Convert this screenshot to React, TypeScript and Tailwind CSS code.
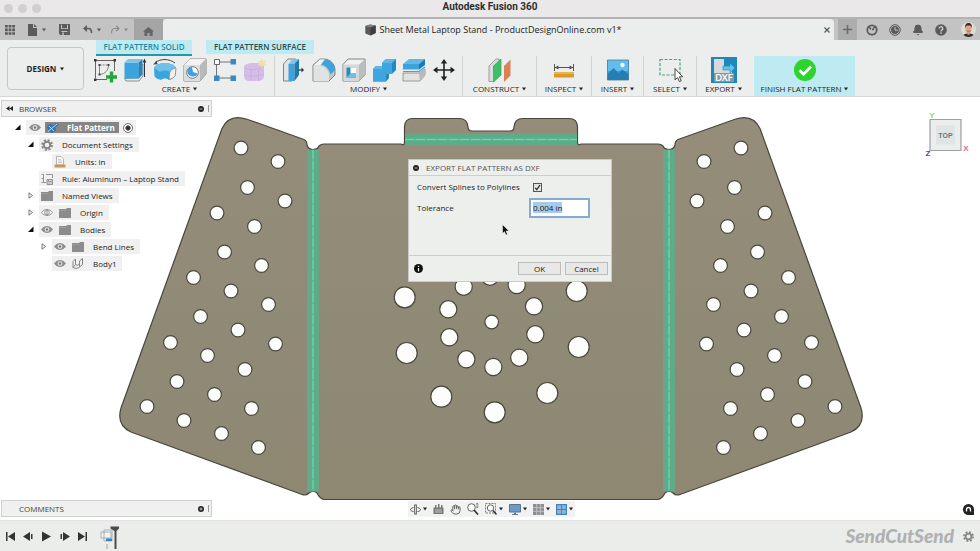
import React, { useEffect, useRef, useState } from 'react';
import { Bell, Hand } from 'lucide-react';

const Caret: React.FC<{ className?: string }> = ({ className = 'text-[#222]' }) => (
    <svg width="4" height="4" viewBox="0 0 4 4" className={`shrink-0 ${className}`}>
        <path d="M0 0.500h4L2 3.500z" fill="currentColor" />
    </svg>
);

/* ---------- Title bar and document tabs ---------- */

const TitleBar: React.FC = () => (
    <header className="relative flex h-[17px] shrink-0 items-center justify-center bg-[#eae8e8]">
        <div className="absolute left-1 flex gap-[5px]">
            <span className="size-[9px] rounded-full bg-[#d1cfcf]" />
            <span className="size-[9px] rounded-full bg-[#d1cfcf]" />
            <span className="size-[9px] rounded-full bg-[#d1cfcf]" />
        </div>
        <h1 className="pb-1 font-[Roboto,sans-serif] text-[10px] leading-3 font-bold text-[#2e2e2e]">Autodesk Fusion 360</h1>
    </header>
);

const DocumentTabs: React.FC = () => (
    <div className="flex h-[23px] shrink-0 border-t-2 border-[#b3b3b3] bg-[#c3c3c3] text-[#5b5b5b]">
        <div className="flex items-center pl-1">
            <button aria-label="Data panel" className="flex w-[23px] pl-px">
                <svg width="10" height="10" viewBox="0 0 10 10" fill="currentColor">
                    <path d="M0 0h2.800v2.600H0zM3.600 0h2.800v2.600H3.600zM7.200 0H10v2.600H7.200zM0 3.600h2.800v2.600H0zM3.600 3.600h2.800v2.600H3.600zM7.200 3.600H10v2.600H7.200zM0 7.200h2.800v2.600H0zM3.600 7.200h2.800v2.600H3.600zM7.200 7.200H10v2.600H7.200z" />
                </svg>
            </button>
            <button aria-label="File" className="flex w-[32px] items-center gap-1">
                <svg width="11" height="12" viewBox="0 0 11 12">
                    <path d="M1 0h5v4h4v8H1z" fill="currentColor" />
                    <path d="M7 0l3 3H7z" fill="currentColor" />
                </svg>
                <Caret className="text-[#5b5b5b]" />
            </button>
            <button aria-label="Save" className="flex w-[24px]">
                <svg width="11" height="11" viewBox="0 0 11 11">
                    <path d="M0 0h11v11H1.500L0 9.500z" fill="currentColor" />
                    <path d="M2 0.800h1v3.400h5V0.800h1v4.200H2zM2.400 7h6v1H2.400zM3.300 8.600h1.500V11H3.300z" fill="#c3c3c3" />
                </svg>
            </button>
            <button aria-label="Undo" className="flex w-[27px] items-center gap-1">
                <svg width="10" height="9" viewBox="0 0 10 9" fill="none">
                    <path d="M2 3.500h3.500q3 0 3 4.500" stroke="currentColor" strokeWidth="1.600" />
                    <path d="M0 3.500L4 0v7z" fill="currentColor" />
                </svg>
                <Caret className="text-[#5b5b5b]" />
            </button>
            <button aria-label="Redo" className="flex w-[24px] items-center gap-1 text-[#8c8c8c]">
                <svg width="10" height="9" viewBox="0 0 10 9" fill="none" stroke="currentColor" strokeWidth="1.200">
                    <path d="M9 3.500H4.500q-3 0-3 5M6 0.800L9 3.500 6 6.200" />
                </svg>
                <Caret className="text-[#8c8c8c]" />
            </button>
        </div>
        <button aria-label="Home" className="flex w-[29px] items-center justify-center bg-[#a5a5a5] pt-1">
            <svg width="11" height="9" viewBox="0 0 11 9">
                <path d="M5.500 0L11 4.600H9.600V9H6.600V6H4.400v3h-3V4.600H0z" fill="#656565" />
            </svg>
        </button>
        <div className="flex flex-1 items-center rounded-t-sm bg-[#ebeeec] pr-1">
            <div className="flex flex-1 items-center justify-center gap-[3px] text-[9px] text-[#222]">
                <svg width="11" height="12" viewBox="0 0 11 12">
                    <path d="M0.300 2L5 0.500l5.700 1v7.500L5.500 11.500 0.300 9.500z" fill="#595959" />
                    <path d="M5.500 3.200l5.200-1.700V9L5.500 11.500z" fill="#3f3f3f" />
                    <path d="M0.300 2L5 0.500l5.700 1-5.200 1.700z" fill="#828282" />
                </svg>
                <span>Sheet Metal Laptop Stand - ProductDesignOnline.com v1*</span>
            </div>
            <button aria-label="Close tab" className="flex">
                <svg width="6" height="6" viewBox="0 0 6 6">
                    <path d="M0.500 0.500l5 5M5.500 0.500l-5 5" stroke="#555" strokeWidth="1.100" />
                </svg>
            </button>
        </div>
        <div className="flex items-center pr-1">
            <button aria-label="New tab" className="ml-1 flex h-full w-[19px] items-center justify-center bg-[#adadad]">
                <svg width="9" height="9" viewBox="0 0 9 9">
                    <path d="M4.500 0v9M0 4.500h9" stroke="#6b6b6b" strokeWidth="1.600" />
                </svg>
            </button>
            <button aria-label="Extensions" className="flex w-[26px] justify-center pl-1">
                <svg width="12" height="12" viewBox="0 0 12 12" fill="none" stroke="currentColor">
                    <circle cx="6" cy="6" r="4.700" strokeWidth="1.800" />
                    <path d="M3 2.500l2 3M7 4.500l3-2.500M6 5.500l2 0" strokeWidth="1.400" />
                </svg>
            </button>
            <button aria-label="Job status" className="flex w-[23px] justify-center">
                <svg width="12" height="12" viewBox="0 0 12 12">
                    <circle cx="6" cy="6" r="5.300" fill="none" stroke="currentColor" strokeWidth="1" />
                    <circle cx="6" cy="6" r="4" fill="currentColor" />
                    <path d="M6 3v3.200h3" fill="none" stroke="#c3c3c3" strokeWidth="1" />
                </svg>
            </button>
            <button aria-label="Notifications" className="flex w-[23px] justify-center">
                <Bell size={12} fill="currentColor" />
            </button>
            <button aria-label="Help" className="flex w-[23px] justify-center">
                <svg width="12" height="12" viewBox="0 0 12 12">
                    <circle cx="6" cy="6" r="5.800" fill="currentColor" />
                    <path d="M4.200 4.600a1.800 1.800 0 1 1 2.700 1.500c-.6.4-.9.6-.9 1.300" fill="none" stroke="#dcdcdc" strokeWidth="1.200" />
                    <circle cx="6" cy="9" r="0.800" fill="#dcdcdc" />
                </svg>
            </button>
            <button aria-label="Account" className="ml-[9px] flex overflow-hidden rounded-full">
                <svg width="15" height="15" viewBox="0 0 15 15">
                    <rect width="15" height="15" fill="#dedad4" />
                    <path d="M1.500 15c.3-2.800 2.600-3.600 6-3.600s5.700.8 6 3.600z" fill="#2b2b2d" />
                    <path d="M5.800 9.500h3.400v2.600l-1.700 1.200-1.700-1.200z" fill="#c98f75" />
                    <ellipse cx="7.500" cy="6.800" rx="3.100" ry="4.200" fill="#d9a58c" />
                    <path d="M4.200 6.200C3.800 2.500 5.300 1 7.500 1s3.800 1.400 3.300 5.200C10.300 4 9.500 3.600 7.500 3.600S4.700 4 4.200 6.200z" fill="#3d2a20" />
                    <path d="M5.700 8.800q1.800 1.200 3.600 0" fill="none" stroke="#8a4a3c" strokeWidth="0.600" />
                </svg>
            </button>
        </div>
    </div>
);

/* ---------- Ribbon icons, all drawn on a 26px grid ---------- */

const Icon: React.FC<{ children: React.ReactNode }> = ({ children }) => (
    <svg width="26" height="26" viewBox="0 0 26 26" fill="none" className="shrink-0">
        {children}
    </svg>
);

const SketchIcon = () => (
    <Icon>
        <path d="M4 3.500h18M3.500 4v17M4 22.500h11M22.500 4v10" stroke="#555" strokeWidth="0.900" />
        <path d="M2 2h2.500v2.500H2zM21.500 2H24v2.500h-2.500zM2 21.500h2.500V24H2z" fill="#333" />
        <path d="M7.500 8v10M16.500 8c0 5-3 9-9 9.500" stroke="#777" strokeWidth="0.900" />
        <path d="M7.500 8h9" stroke="#777" strokeWidth="0.900" strokeDasharray="2 1" />
        <path d="M6.500 7h2v2h-2zM15.500 7h2v2h-2zM6.500 16.500h2v2h-2z" fill="#444" />
        <path d="M19.500 14.500v11M14 20h11" stroke="#25a53f" strokeWidth="3.400" />
    </Icon>
);

const ExtrudeIcon = () => (
    <Icon>
        <path d="M2.500 21.500L4 24h13l4-5V7l-4 3v11z" fill="#e9ebea" stroke="#777" strokeWidth="0.800" />
        <path d="M2.500 5.500h14v16h-14z" fill="#3ba3dd" />
        <path d="M2.500 5.500L6 2h14.500l-4 3.500z" fill="#7cc6ec" />
        <path d="M16.500 5.500l4-3.500v15.500l-4 4z" fill="#2585bd" />
        <path d="M22.500 20V5" stroke="#333" strokeWidth="1" />
        <path d="M22.500 1.500l1.800 4h-3.600z" fill="#333" />
    </Icon>
);

const RevolveIcon = () => (
    <Icon>
        <path d="M2 11c3-6 18-7 22 0l-1 8c-1 2-4 3-6 4-2-2-6-2-8 0-3-1-6-2-6.500-4z" fill="#3ba3dd" />
        <path d="M2 11c3-6 18-7 22 0l-6 4c-2.500-2-7-2-10 0z" fill="#6fc0ea" />
        <path d="M17.500 16c1-3 3.500-5 6.500-5l-.8 8c-1.700 2-4 3-6.200 3.500z" fill="#eef0f0" stroke="#858585" strokeWidth="0.800" />
        <path d="M3 5.500C9 1.500 17 1.500 23 6" stroke="#444" strokeWidth="1" />
        <path d="M1 7.500l3.800-3.600.7 3.300z" fill="#444" />
    </Icon>
);

const HoleIcon = () => (
    <Icon>
        <path d="M2 8l6-6h16v15l-6 7H2z" fill="#d3d4d4" stroke="#777" strokeWidth="0.900" />
        <path d="M2 8h16v16H2z" fill="#dcdddd" />
        <path d="M2 8l6-6h16l-6 6z" fill="#f2f2f2" />
        <path d="M18 8l6-6v15l-6 7z" fill="#b8b9b9" />
        <circle cx="10.500" cy="15.500" r="5.800" fill="#fff" stroke="#666" strokeWidth="0.900" />
        <path d="M5.500 13a5.500 5.500 0 0 0 10.300 3.500L11 15l-1-5c-2 0-3.800 1-4.500 3z" fill="#3ba3dd" />
    </Icon>
);

const PatternIcon = () => (
    <Icon>
        <path d="M7 5h13M4.500 8v12M7 21h13" stroke="#5c6670" strokeWidth="0.900" />
        <path d="M2.500 2.500h5v5h-5z" fill="#fff" stroke="#555" strokeWidth="0.900" />
        <path d="M18.500 2h5.500v5.500h-5.500zM2 18.500h5.500V24H2zM18.500 18.500H24V24h-5.500z" fill="#3f88bd" />
    </Icon>
);

const FormIcon = () => (
    <Icon>
        <path d="M2 11c0-3 2-4 6-5h9l5 3v10c0 3-3 5-6 5H7c-3 0-5-2-5-5z" fill="#d5bde8" />
        <path d="M2 11c4 2 10 2 14 1 3-.8 5-2 6-3M9 12v12M16.500 12v12M2 18c5 1.500 14 1.500 20-1" stroke="#c9aee0" strokeWidth="0.900" />
        <path d="M20 1l1.200 3L24.500 3.500 22.500 6l2 2.600-3.300-.4L20 11.500l-1.200-3.300-3.300.4 2-2.600-2-2.500 3.300.5z" fill="#efdfa8" />
    </Icon>
);

const PressPullIcon = () => (
    <Icon>
        <path d="M2.500 24V7L7 2h8v18l-4 4z" fill="#e3e5e5" stroke="#777" strokeWidth="0.900" />
        <path d="M7.500 7h6v17h-6z" fill="#3ba3dd" />
        <path d="M7.500 7l4-5H18l-4.500 5z" fill="#7cc6ec" />
        <path d="M13.500 7L18 2v16l-4.500 6z" fill="#2078ab" />
        <path d="M17.500 13h4" stroke="#333" strokeWidth="1.200" />
        <path d="M20.500 10.500L23 13l-2.500 2.500z" fill="#333" />
    </Icon>
);

const FilletIcon = () => (
    <Icon>
        <path d="M2 24V8l7-6h4c6 0 11 5 11 11v5l-6 6z" fill="#c4c6c6" stroke="#777" strokeWidth="0.900" />
        <path d="M2.500 8.500L9 2.500h5L9 8.500z" fill="#f4f5f5" />
        <path d="M2.500 8.500h5c6 0 10.500 5 10.500 10.500v5H2.500z" fill="#e1e3e3" />
        <path d="M10 7.500l4-5C19.500 3 24 7.500 24 13l-4.500 4.500C18.500 12.500 15 8.500 10 7.500z" fill="#3ba3dd" />
    </Icon>
);

const ShellIcon = () => (
    <Icon>
        <path d="M2 7.500L7 2h17v16l-6 6H2z" fill="#f0f1f1" stroke="#777" strokeWidth="0.900" />
        <path d="M18 7.500L24 2v16l-6 6z" fill="#bcbebe" />
        <path d="M2.500 7.500H18V24H2.500z" fill="#d6d8d8" />
        <path d="M5.500 10.500H15v10H5.500z" fill="#2c89bd" />
        <path d="M9.500 10.500H15v6H9.500z" fill="#fff" />
        <path d="M5.500 20.500l4-4H15v4z" fill="#6dbfe9" />
    </Icon>
);

const CombineIcon = () => (
    <Icon>
        <path d="M11 6l4-4h10v11l-4 4h-3v4l-3 3.500H2V12l3-3h6z" fill="#2787bf" />
        <path d="M2 12h9V6h10v11h-6v7.500H2z" fill="#3ea6df" />
        <path d="M11 6l4-4h10l-4 4zM2 12l3-3h6v3z" fill="#5fb6e6" />
    </Icon>
);

const SplitIcon = () => (
    <Icon>
        <path d="M2 16h16l6-4v6l-5 6H2z" fill="#e1e3e3" stroke="#858585" strokeWidth="0.800" />
        <path d="M18 16l6-4v6l-5 6z" fill="#b9bbbb" />
        <path d="M2 7h16v5.500H2z" fill="#3ba3dd" />
        <path d="M2 7l6-5h16l-6 5z" fill="#62b9e8" />
        <path d="M18 7l6-5v6l-6 4.500z" fill="#2078ab" />
        <path d="M2 14.500h16l6-4.500" stroke="#3ba3dd" strokeWidth="1.200" />
    </Icon>
);

const MoveIcon = () => (
    <Icon>
        <path d="M13 5v16M5 13h16" stroke="#222" strokeWidth="1.600" />
        <path d="M13 2l3.200 4.500H9.800zM13 24l3.200-4.500H9.800zM2 13l4.500-3.200v6.400zM24 13l-4.500-3.200v6.400z" fill="#222" />
    </Icon>
);

const ConstructIcon = () => (
    <Icon>
        <path d="M2 9l7-7h3v17l-6 5.500H2z" fill="#dcdede" stroke="#888" strokeWidth="0.800" />
        <path d="M6.500 9L14 2v16l-7.500 7z" fill="#3cc169" stroke="#2b9350" strokeWidth="0.600" />
        <path d="M17 9l6.500-6.500v16L17 25z" fill="#dd8057" />
    </Icon>
);

const InspectIcon = () => (
    <Icon>
        <path d="M3.500 7v7M22.500 7v7M4 10.500h18" stroke="#555" strokeWidth="1" />
        <path d="M3.500 10.500l4-2v4zM22.500 10.500l-4-2v4z" fill="#555" />
        <path d="M3 15h20v5.500H3z" fill="#d79a2b" />
        <path d="M3 15h20v2H3z" fill="#eab44e" />
    </Icon>
);

const InsertIcon = () => (
    <Icon>
        <path d="M2.500 3h21v20h-21z" fill="#3aa1dc" />
        <path d="M2.500 3h21v11h-21z" fill="#62bdec" />
        <path d="M2.500 17l6-6 5 5 3.500-3.500 6.500 4.500v6h-21z" fill="#247eb2" />
        <circle cx="17.500" cy="8" r="2.200" fill="#f5f8fa" />
        <path d="M2.500 3h21v20h-21z" stroke="#4d7895" strokeWidth="0.800" />
    </Icon>
);

const SelectIcon = () => (
    <Icon>
        <path d="M3 2.500h20v15.500H3z" stroke="#46a86a" strokeWidth="1.200" strokeDasharray="3 1.600" />
        <path d="M18 11.500v11.300l2.600-2.200 1.800 4 1.800-.8-1.800-4h3.200z" fill="#fff" stroke="#333" strokeWidth="0.900" />
    </Icon>
);

const ExportIcon = () => (
    <Icon>
        <path d="M0 0h26v26H0z" fill="#1e88ba" />
        <path d="M3 2h10v8h8v8H3z" fill="#d6dadb" />
        <path d="M12 9h7V6l5 5-5 5v-3h-7z" fill="#5fc2ee" stroke="#1e88ba" strokeWidth="0.600" />
        <path d="M3 16h20v9H3z" fill="#8c959a" />
        <text x="13" y="24" textAnchor="middle" fill="#fff" className="font-[Lato,sans-serif] text-[9px] font-bold">DXF</text>
    </Icon>
);

const FinishIcon = () => (
    <Icon>
        <circle cx="13" cy="13" r="11" fill="#2cd42c" />
        <path d="M7.500 13.200l4 4 7.500-7.700" stroke="#fff" strokeWidth="2.800" />
    </Icon>
);

/* ---------- Ribbon ---------- */

interface ToolGroupProps {
    label: string;
    icons: { name: string; icon: React.ReactNode }[];
    className: string;
}

const ToolGroup: React.FC<ToolGroupProps> = ({ label, icons, className }) => (
    <div className={`flex flex-col items-center pt-px ${className}`}>
        <div className="flex gap-1">
            {icons.map(({ name, icon }) => (
                <button key={name} aria-label={name} title={name}>
                    {icon}
                </button>
            ))}
        </div>
        <button className="flex items-center gap-[3px] text-[8px] leading-3 font-medium whitespace-nowrap">
            {label} <Caret />
        </button>
    </div>
);

const Ribbon: React.FC = () => (
    <div className="flex h-[57px] shrink-0 gap-2 border-b border-[#d5d6d6] bg-[#ebeeec] pl-[7px] text-[#1f1f1f]">
        <button className="mt-[7px] flex h-[43px] w-[77px] shrink-0 items-center justify-center gap-1 rounded-sm border border-[#c5c7c6] text-[8px] font-bold">
            DESIGN <Caret />
        </button>
        <div className="flex min-w-0 flex-1 flex-col">
            <div className="flex h-4 shrink-0 items-start gap-[14px] pl-1 text-[8px] leading-[14px] font-semibold">
                <button className="h-4 w-24 border-b-2 border-[#2695ae] bg-[#bdebf1] text-[#1d8ba4]">FLAT PATTERN SOLID</button>
                <button className="w-[108px] bg-[#bdebf1] text-[#2b4b50]">FLAT PATTERN SURFACE</button>
            </div>
            <div className="flex flex-1 [&>div]:shrink-0">
                <ToolGroup
                    label="CREATE"
                    className="w-[183px] border-r border-[#d0d2d1] pr-[7px]"
                    icons={[
                        { name: 'Create Sketch', icon: <SketchIcon /> },
                        { name: 'Extrude', icon: <ExtrudeIcon /> },
                        { name: 'Revolve', icon: <RevolveIcon /> },
                        { name: 'Hole', icon: <HoleIcon /> },
                        { name: 'Pattern', icon: <PatternIcon /> },
                        { name: 'Create Form', icon: <FormIcon /> },
                    ]}
                />
                <ToolGroup
                    label="MODIFY"
                    className="w-[188px] border-r border-[#d0d2d1]"
                    icons={[
                        { name: 'Press Pull', icon: <PressPullIcon /> },
                        { name: 'Fillet', icon: <FilletIcon /> },
                        { name: 'Shell', icon: <ShellIcon /> },
                        { name: 'Combine', icon: <CombineIcon /> },
                        { name: 'Split Body', icon: <SplitIcon /> },
                        { name: 'Move', icon: <MoveIcon /> },
                    ]}
                />
                <ToolGroup label="CONSTRUCT" className="w-[74px] border-r border-[#d0d2d1]" icons={[{ name: 'Offset Plane', icon: <ConstructIcon /> }]} />
                <ToolGroup label="INSPECT" className="w-[55px] border-r border-[#d0d2d1]" icons={[{ name: 'Measure', icon: <InspectIcon /> }]} />
                <ToolGroup label="INSERT" className="w-[52px] border-r border-[#d0d2d1]" icons={[{ name: 'Canvas', icon: <InsertIcon /> }]} />
                <ToolGroup label="SELECT" className="w-[53px] border-r border-[#d0d2d1]" icons={[{ name: 'Window Selection', icon: <SelectIcon /> }]} />
                <ToolGroup label="EXPORT" className="w-[53px]" icons={[{ name: 'Export as DXF', icon: <ExportIcon /> }]} />
                <ToolGroup label="FINISH FLAT PATTERN" className="ml-1 w-[101px] bg-[#bdebf1]" icons={[{ name: 'Finish', icon: <FinishIcon /> }]} />
            </div>
        </div>
    </div>
);

/* ---------- Browser tree ---------- */

const Eye: React.FC<{ off?: boolean }> = ({ off }) => (
    <svg width="12" height="9" viewBox="0 0 12 9" className="shrink-0">
        <path d="M0.500 4.500C3 0.500 9 0.500 11.500 4.500 9 8.500 3 8.500 0.500 4.500z" fill={off ? 'none' : '#8e8e8e'} stroke="#8e8e8e" strokeWidth="0.900" />
        <circle cx="6" cy="4.500" r="2.300" fill={off ? 'none' : '#e8e8e8'} stroke={off ? '#8e8e8e' : 'none'} strokeWidth="0.900" />
        {off ? <path d="M6 1.500v6" stroke="#8e8e8e" strokeWidth="0.900" /> : <circle cx="6" cy="4.500" r="1.200" fill="#777" />}
    </svg>
);

const Folder = () => (
    <svg width="12" height="10" viewBox="0 0 12 10" className="shrink-0">
        <path d="M0 1h7l1-1h4v10H0z" fill="#8c8c8c" />
        <path d="M0 2.500h7.500" stroke="#a8a8a8" strokeWidth="0.600" />
    </svg>
);

const Gear: React.FC<{ size?: number }> = ({ size = 12 }) => (
    <svg width={size} height={size} viewBox="0 0 12 12" className="shrink-0">
        <circle cx="6" cy="6" r="5" fill="none" stroke="#858585" strokeWidth="1.800" strokeDasharray="2.100 1.830" />
        <circle cx="6" cy="6" r="3.200" fill="none" stroke="#858585" strokeWidth="1.900" />
    </svg>
);

const Units = () => (
    <svg width="12" height="12" viewBox="0 0 12 12" className="shrink-0">
        <path d="M2.500 0.500h4.500l2.500 2.500v6h-7z" fill="#fafafa" stroke="#999" strokeWidth="0.700" />
        <path d="M4 3.500h3M4 5h4M4 6.500h4" stroke="#aaa" strokeWidth="0.600" />
        <path d="M0.500 8.500h11v3H0.500z" fill="#c49a5c" />
    </svg>
);

const Rule = () => (
    <svg width="12" height="12" viewBox="0 0 12 12" fill="none" stroke="#8c8c8c" strokeWidth="0.900" className="shrink-0">
        <path d="M0.500 1.500H3M5 1.500h6.500V5M0.500 5.500H3M0.500 9.500H5M2.500 1.500v8" />
        <path d="M6 6.500h5.500v5H6zM7.500 6.500v2h3" fill="#c8c8c8" />
    </svg>
);

const Body = () => (
    <svg width="12" height="11" viewBox="0 0 12 11" fill="none" stroke="#858585" strokeWidth="1" className="shrink-0">
        <path d="M1 3.500L3.500 1v5.500L1 9.500zM1 9.500q3 2 6 0L10.500 6.500V0.500L7.500 3v5.500M3.500 6.500q1.500 1.500 4 0" />
    </svg>
);

const FlatPattern = () => (
    <svg width="13" height="12" viewBox="0 0 13 12" className="shrink-0">
        <path d="M1 4.500l3-3 3 2 3-2.500 2.500 2-3 2.500.5 3-4 2.500-4-2z" fill="#3277b4" />
        <path d="M2 9.500l9-7.500M3 4l5 5" stroke="#d5e7f5" strokeWidth="0.900" />
    </svg>
);

type Arrow = 'open' | 'closed';

interface TreeRowProps {
    label: string;
    icons: React.ReactNode;
    arrow?: Arrow;
    indent: string;
}

const TreeArrow: React.FC<{ arrow?: Arrow }> = ({ arrow }) => (
    <span className="flex w-3 shrink-0 items-center pl-px">
        {arrow && (
            <button aria-label={arrow === 'open' ? 'Collapse' : 'Expand'} className="flex">
                <svg width="6" height="7" viewBox="0 0 6 7">
                    {arrow === 'open' ? <path d="M5.500 0.500v5.500H0z" fill="#111" /> : <path d="M1 0.800l3.500 2.700L1 6.200z" fill="none" stroke="#555" strokeWidth="0.800" />}
                </svg>
            </button>
        )}
    </span>
);

const TreeRow: React.FC<TreeRowProps> = ({ label, icons, arrow, indent }) => (
    <li className={`flex h-[15px] ${indent}`}>
        <TreeArrow arrow={arrow} />
        <div className="flex items-center gap-[6px] bg-[#eff0ef] pr-[6px] pl-[2px]">
            {icons}
            <span className="pl-[3px] whitespace-nowrap">{label}</span>
        </div>
    </li>
);

const PanelHeader: React.FC<{ title: string; collapsible?: boolean }> = ({ title, collapsible }) => (
    <div className="flex h-[17px] w-[211px] items-center border border-[#cfd0cf] bg-[#eff0ef] pl-1 text-[8px] text-[#444]">
        <span className="w-[13px]">
            {collapsible && (
                <svg width="7" height="5" viewBox="0 0 7 5">
                    <path d="M3.500 0v5L0 2.500zM7 0v5L3.500 2.500z" fill="#222" />
                </svg>
            )}
        </span>
        <h2 className="flex-1">{title}</h2>
        <button aria-label={`${title} options`} className="flex">
            <svg width="6" height="6" viewBox="0 0 6 6">
                <circle cx="3" cy="3" r="3" fill="#222" />
                <path d="M1.500 3h3" stroke="#ddd" strokeWidth="0.800" />
                {!collapsible && <path d="M3 1.500v3" stroke="#ddd" strokeWidth="0.800" />}
            </svg>
        </button>
        <span className="ml-1 h-[7px] w-[3px] border-l border-[#999]" />
    </div>
);

const BrowserPanel: React.FC = () => (
    <section className="flex flex-col gap-[2px]">
        <PanelHeader title="BROWSER" collapsible />
        <ul className="mt-px flex flex-col gap-[2px] text-[8px] text-[#222]">
            <li className="flex h-[15px] pl-[13px]">
                <TreeArrow arrow="open" />
                <div className="flex items-center gap-1 bg-[#eff0ef] px-[3px]">
                    <Eye />
                    <span className="flex h-[11px] items-center gap-[8px] bg-[#858585] pr-1 pl-px font-bold whitespace-nowrap text-white">
                        <FlatPattern /> Flat Pattern
                    </span>
                    <input type="radio" aria-label="Activate Flat Pattern" defaultChecked className="size-[10px] appearance-none rounded-full border border-[#777] bg-[radial-gradient(#333_2px,#f5f5f5_3px)]" />
                </div>
            </li>
            <TreeRow label="Document Settings" indent="pl-[26px]" arrow="open" icons={<Gear />} />
            <TreeRow label="Units: in" indent="pl-[39px]" icons={<Units />} />
            <TreeRow label="Rule: Aluminum – Laptop Stand" indent="pl-[26px]" icons={<Rule />} />
            <TreeRow label="Named Views" indent="pl-[26px]" arrow="closed" icons={<Folder />} />
            <TreeRow label="Origin" indent="pl-[26px]" arrow="closed" icons={<><Eye off /><Folder /></>} />
            <TreeRow label="Bodies" indent="pl-[26px]" arrow="open" icons={<><Eye /><Folder /></>} />
            <TreeRow label="Bend Lines" indent="pl-[39px]" arrow="closed" icons={<><Eye /><Folder /></>} />
            <TreeRow label="Body1" indent="pl-[39px]" icons={<><Eye /><Body /></>} />
        </ul>
    </section>
);

/* ---------- Sheet metal part ---------- */

const WING_HOLES = [
    [241, 148], [278, 161.5], [247.5, 187.5], [285, 201], [217, 213], [254.5, 226.5],
    [224.5, 252], [261.5, 265.5], [193.5, 277.5], [231, 291], [268.5, 304.5], [200.5, 316.5],
    [238, 330], [275.5, 344], [170.5, 342.5], [207.5, 355.5], [245, 369.5], [177, 381.5],
    [214.5, 394.5], [251.5, 408.5], [147, 406.5], [184, 420.5], [221.5, 433.5], [258.5, 447.5],
];

const CENTER_HOLES = [
    [404.7, 297.3, 10.5], [406.7, 353, 10.5], [441.3, 396.7, 10.5], [494.7, 412.3, 10.5],
    [547.3, 393, 10.5], [578.7, 347, 10.5], [576.7, 291, 10.5],
    [448.3, 309.3, 8.6], [449.3, 337.3, 8.6], [466.3, 359.3, 8.6], [493.3, 367, 8.6],
    [519.3, 357.7, 8.6], [535.3, 334.3, 8.6], [534, 306.3, 8.6], [516.7, 285, 8.6],
    [463.7, 286.7, 8.6], [490, 276.7, 8.6], [491.7, 322, 6.8],
];

const Wing: React.FC = () => (
    <g>
        {WING_HOLES.map(([x, y]) => (
            <circle key={`${x}-${y}`} cx={x} cy={y} r="6.9" fill="#fcfdfb" />
        ))}
        <path d="M307 149.500h12V491.500h-12z" fill="#6aa686" stroke="none" />
        <path d="M309.500 150V491M316.500 150V491" stroke="#55b08c" strokeWidth="1.500" />
        <path d="M313 150V491" stroke="#4cc39a" strokeWidth="2" />
        <path d="M313 150V491" stroke="#74dcb8" strokeWidth="0.800" strokeDasharray="9 2" />
    </g>
);

const FlatPart: React.FC = () => (
    <svg viewBox="0 97 980 423" className="absolute inset-0 size-full" stroke="#48473e" strokeWidth="1.200">
        <defs>
            <linearGradient id="metal" x1="0" y1="0" x2="0" y2="1">
                <stop offset="0" stopColor="#958d79" />
                <stop offset="0.550" stopColor="#8f8a76" />
                <stop offset="1" stopColor="#8e8873" />
            </linearGradient>
        </defs>
        <path
            d="M304 139.500L247 119.200Q229 113.500 222 128.500L121 408Q116 425 131 432L302 494.500Q306 496 309 493Q313 489.500 317 493Q320 499.500 325 499.500H657Q662 499.500 665 493Q669 489.500 673 493Q676 496 680 494.500L851 432Q866 425 861 408L760 128.500Q753 113.500 735 119.200L678 139.500Q675 141 675 145Q674 149.500 669 149.500Q664 149.500 663 146Q661 144 658 144H581Q577.500 146 577.500 142V127Q577.500 118.500 569 118.500H523Q514.500 118.500 514 127Q514 131 510 131H472Q468 131 468 127Q467.500 118.500 459 118.500H413Q404.500 118.500 404.500 127V142Q404.500 146 401 144H324Q321 144 319 146Q318 149.500 313 149.500Q308 149.500 307 145Q307 141 304 139.500Z"
            fill="url(#metal)"
        />
        <Wing />
        <g transform="translate(982 0) scale(-1 1)">
            <Wing />
        </g>
        <path d="M405 133.500h172v12H405z" fill="#6aa686" stroke="none" />
        <path d="M405 136h172M405 143h172" stroke="#55b08c" strokeWidth="1.500" />
        <path d="M405 139.500h172" stroke="#4cc39a" strokeWidth="2" />
        <path d="M405 139.500h172" stroke="#74dcb8" strokeWidth="0.800" strokeDasharray="9 2" />
        {CENTER_HOLES.map(([x, y, r]) => (
            <circle key={`${x}-${y}`} cx={x} cy={y} r={r} fill="#fdfefc" />
        ))}
    </svg>
);

const ViewCube: React.FC = () => (
    <svg width="48" height="52" viewBox="0 0 48 52" className="relative font-[Liberation_Sans,sans-serif]" aria-label="View cube">
        <path d="M7 9.500h31v31H7z" fill="#eceeee" stroke="#9da1a1" strokeWidth="1.200" />
        <path d="M13 15.500h19v19H13z" fill="#dfe5e4" />
        <text x="22.500" y="28" textAnchor="middle" fill="#70777a" className="text-[7px] font-bold">TOP</text>
        <text x="9" y="8" textAnchor="middle" fill="#7ee08f" className="text-[8px] font-bold">Y</text>
        <text x="43" y="41" textAnchor="middle" fill="#d8707a" className="text-[8px] font-bold">X</text>
        <text x="5" y="46" textAnchor="middle" fill="#4343c5" className="text-[8px] font-bold">Z</text>
    </svg>
);

/* ---------- Export dialog ---------- */

const ExportDialog: React.FC = () => {
    const [convert, setConvert] = useState(true);
    const [tolerance, setTolerance] = useState('0.004 in');
    const toleranceRef = useRef<HTMLInputElement>(null);

    useEffect(() => {
        toleranceRef.current?.focus();
        toleranceRef.current?.select();
    }, []);

    return (
        <form
            role="dialog"
            aria-labelledby="export-title"
            onSubmit={(e) => e.preventDefault()}
            className="absolute top-[62px] left-1/2 -ml-[82px] flex h-[123px] w-[204px] flex-col border border-[#c9c9c9] bg-[#edefed] text-[8px] text-[#222]"
        >
            <div className="flex h-4 items-center gap-[7px] border-b border-[#cdcfcd] pl-1">
                <svg width="6" height="6" viewBox="0 0 6 6">
                    <circle cx="3" cy="3" r="3" fill="#222" />
                    <path d="M1.500 3h3" stroke="#ddd" strokeWidth="0.800" />
                </svg>
                <h2 id="export-title" className="text-[#555]">EXPORT FLAT PATTERN AS DXF</h2>
            </div>
            <div className="grid flex-1 grid-cols-[112px_61px] content-start items-center gap-y-[5px] pt-[5px] pl-2">
                <label htmlFor="convert">Convert Splines to Polylines</label>
                <span className="relative flex pl-1">
                    <input
                        id="convert"
                        type="checkbox"
                        checked={convert}
                        onChange={(e) => setConvert(e.target.checked)}
                        className="size-[9px] appearance-none border border-[#555] bg-[#e3e3e3]"
                    />
                    {convert && (
                        <svg width="9" height="9" viewBox="0 0 9 9" className="pointer-events-none absolute">
                            <path d="M2.200 4.800l1.600 1.800L7 2" fill="none" stroke="#222" strokeWidth="1.200" />
                        </svg>
                    )}
                </span>
                <label htmlFor="tolerance">Tolerance</label>
                <input
                    id="tolerance"
                    ref={toleranceRef}
                    value={tolerance}
                    onChange={(e) => setTolerance(e.target.value)}
                    className="h-5 w-[61px] border-2 border-[#86abd3] bg-white pb-px pl-[2px] outline-none selection:bg-[#a5cbe8] selection:text-[#222]"
                />
            </div>
            <div className="flex h-[26px] items-center gap-1 border-t border-[#cdcfcd] pr-[3px] pl-[5px]">
                <svg width="9" height="9" viewBox="0 0 9 9" className="mr-auto">
                    <circle cx="4.500" cy="4.500" r="4.500" fill="#111" />
                    <path d="M4.500 4v3.200M4.500 1.700v1.200" stroke="#fff" strokeWidth="1.200" />
                </svg>
                <button type="submit" className="h-[13px] w-[43px] border border-[#bcbcbc] bg-[#e7e8e7] leading-[11px]">OK</button>
                <button type="button" className="h-[13px] w-[43px] border border-[#bcbcbc] bg-[#e7e8e7] leading-[11px]">Cancel</button>
            </div>
            {/* Mouse pointer */}
            <svg width="8" height="12" viewBox="0 0 8 12" className="pointer-events-none absolute top-[64px] left-[93px]">
                <path d="M0.500 0.500v9l2-1.800 1.400 3.300 1.600-.7-1.400-3.200h2.900z" fill="#111" stroke="#fff" strokeWidth="0.500" />
            </svg>
        </form>
    );
};

/* ---------- Navigation bar and timeline ---------- */

const NavBar: React.FC = () => (
    <nav className="absolute bottom-[3px] left-1/2 -ml-[82px] flex h-4 items-center gap-[6px] bg-[#f0f3f1] px-[2px] text-[#555] [&>button]:flex [&>button]:items-center [&>button]:gap-[2px]">
        <button aria-label="Orbit">
            <svg width="11" height="11" viewBox="0 0 11 11" fill="none" stroke="#555">
                <path d="M5.500 0.500v10" strokeWidth="2.600" />
                <path d="M5.500 1.500v8" stroke="#f0f3f1" strokeWidth="0.800" />
                <path d="M3.500 3.500C-0.500 4.500-0.500 7 3.500 7.500M7.500 3.500c4 1 4 3.500 0 4" />
            </svg>
            <Caret />
        </button>
        <button aria-label="Look at">
            <svg width="11" height="10" viewBox="0 0 11 10">
                <path d="M0.500 3.500h10V10h-10zM2 1h1.500v2.500H2zM5 0h1.500v4H5zM8 1h1.500v3H8z" fill="#777" />
                <path d="M2 6h7M2 8h7" stroke="#ddd" strokeWidth="0.800" />
            </svg>
        </button>
        <button aria-label="Pan"><Hand size={11} /></button>
        <button aria-label="Zoom">
            <svg width="12" height="12" viewBox="0 0 12 12" fill="none" stroke="#666">
                <circle cx="4.500" cy="4.500" r="3.800" fill="#f8fbfb" />
                <path d="M7 7l4 4.500" stroke="#333" strokeWidth="1.700" />
                <path d="M9 1.500L10.200 0l1.200 1.500M10.200 0.500v4M9 3.500l1.200 1.500 1.200-1.500" strokeWidth="0.700" />
            </svg>
        </button>
        <button aria-label="Zoom window">
            <svg width="12" height="12" viewBox="0 0 12 12" fill="none" stroke="#666">
                <path d="M0.500 0.500h10v9.500h-10z" strokeDasharray="2 1" strokeWidth="0.800" />
                <circle cx="5.500" cy="5" r="3.200" fill="#f8fbfb" />
                <path d="M8 7.500l3.500 4" stroke="#333" strokeWidth="1.500" />
            </svg>
            <Caret />
        </button>
        <button aria-label="Display settings">
            <svg width="12" height="11" viewBox="0 0 12 11">
                <path d="M0.500 0.500h11v7.500H0.500z" fill="#6a9cc9" stroke="#5d7387" />
                <path d="M5 8.500h2V10H9v1H3v-1h2z" fill="#6b7d8c" />
            </svg>
            <Caret />
        </button>
        <button aria-label="Grid and snaps">
            <svg width="11" height="11" viewBox="0 0 11 11">
                <path d="M0 0h11v11H0z" fill="#8d9092" />
                <path d="M3.700 0v11M7.300 0v11M0 3.700h11M0 7.300h11" stroke="#c8caca" strokeWidth="0.800" />
            </svg>
            <Caret />
        </button>
        <button aria-label="Viewports">
            <svg width="11" height="11" viewBox="0 0 11 11">
                <path d="M0 0h11v11H0z" fill="#4581b8" />
                <path d="M1.200 1.200h3.800V5H1.200zM6 1.200h3.800V5H6zM1.200 6h3.800v3.800H1.200zM6 6h3.800v3.800H6z" fill="#8cb6dc" />
            </svg>
            <Caret />
        </button>
    </nav>
);

const PLAYBACK = [
    { name: 'Go to start', d: 'M1 1h1.500v9H1zM10 1v9L3 5.500z' },
    { name: 'Step back', d: 'M7 1v9L0 5.500zM8 3h1.500v5H8z' },
    { name: 'Play', d: 'M1 0.500v10L10 5.500z' },
    { name: 'Step forward', d: 'M4 1v9l7-4.500zM1.500 3H3v5H1.500z' },
    { name: 'Go to end', d: 'M8.500 1H10v9H8.500zM1 1v9l7-4.500z' },
];

const Timeline: React.FC = () => (
    <footer className="flex h-[31px] shrink-0 items-center border-t border-[#e2e3e2] bg-[#ebedeb] pr-[6px] pl-[5px]">
        <div className="flex gap-[7px]">
            {PLAYBACK.map(({ name, d }) => (
                <button key={name} aria-label={name}>
                    <svg width="11" height="11" viewBox="0 0 11 11">
                        <path d={d} fill="#333" />
                    </svg>
                </button>
            ))}
        </div>
        <svg width="20" height="24" viewBox="0 0 20 24" className="mt-1 ml-3" aria-label="Timeline marker">
            <path d="M4 4h8v11H4zM1 6h10v6H1z" fill="#f2f4f4" stroke="#98a0a6" strokeWidth="0.800" />
            <path d="M6 12.500h6v2.500H6z" fill="#3c84bd" />
            <path d="M7 18v5" stroke="#999" strokeWidth="0.900" />
            <path d="M10.500 0.500h8.500v2l-2.500 2.500V23h-2V5L10.500 2.500z" fill="#4a4a4a" />
        </svg>
        <span className="ml-auto pr-[9px] font-[Lato,cursive] text-[19px] leading-6 font-black text-[#b0b0b0] italic">SendCutSend</span>
        <button aria-label="Timeline settings"><Gear size={11} /></button>
    </footer>
);

export default function App() {
    return (
        <div className="flex h-screen flex-col overflow-hidden bg-white font-[Open_Sans,Noto_Sans,sans-serif]">
            <TitleBar />
            <DocumentTabs />
            <Ribbon />
            <main className="relative flex flex-1 flex-col justify-between pt-[3px] pb-[3px]">
                <FlatPart />
                <div className="relative flex items-start justify-between pr-[9px] pl-px">
                    <BrowserPanel />
                    <div className="pt-[10px]">
                        <ViewCube />
                    </div>
                </div>
                <div className="relative flex items-end justify-between pr-[6px] pl-px">
                    <PanelHeader title="COMMENTS" />
                    <button aria-label="Assistant" className="pb-[2px]">
                        <svg width="11" height="11" viewBox="0 0 11 11">
                            <path d="M5.500 0A5.500 5.500 0 1 0 5.500 11H11V5.500A5.500 5.500 0 0 0 5.500 0z" fill="#222" />
                            <path d="M3.500 7.500V5.500a2 2 0 0 1 4 0v2" fill="none" stroke="#fff" strokeWidth="1.300" />
                        </svg>
                    </button>
                </div>
                <NavBar />
                <ExportDialog />
            </main>
            <Timeline />
        </div>
    );
}
